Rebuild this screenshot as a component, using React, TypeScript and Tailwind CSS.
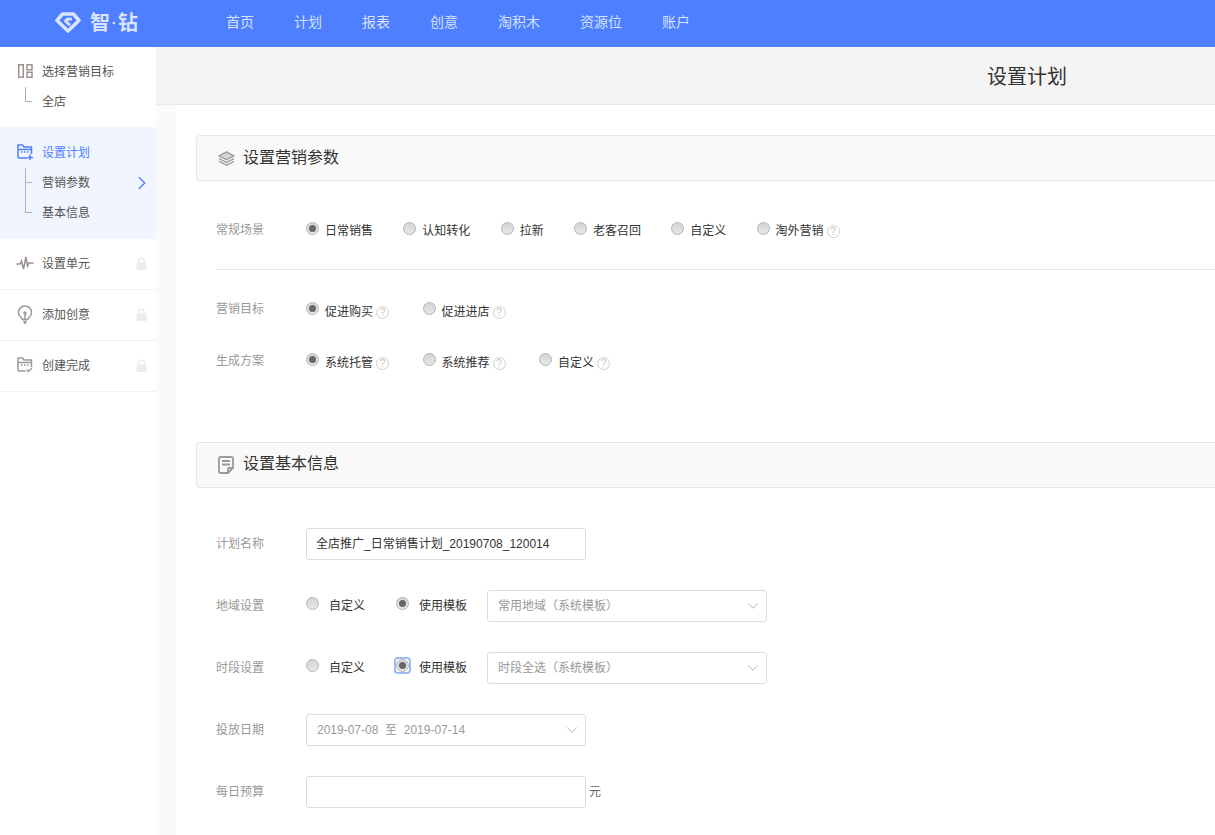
import React from "react";
import { ChevronDown, ChevronRight } from "lucide-react";

const font = "font-['Liberation_Sans','Noto_Sans_CJK_SC',sans-serif]";

function Radio({ checked, focused, offset }: { checked?: boolean; focused?: boolean; offset: string }) {
  return (
    <span className={`relative flex h-[13px] w-[13px] shrink-0 items-center justify-center ${offset} ${focused ? "rounded-[2px] outline-2 outline-[#9dbcf5]" : ""}`}>
      <span className="flex h-[13px] w-[13px] items-center justify-center rounded-full border border-[#b4b4b4] bg-gradient-to-b from-[#d4d4d4] to-[#e8e8e8]">
        {checked && <span className="h-[7px] w-[7px] rounded-full bg-[#666]" />}
      </span>
    </span>
  );
}

function Help() {
  return (
    <span className="ml-[3px] mt-[1px] flex h-[13px] w-[13px] shrink-0 items-center justify-center rounded-full border border-[#d0d0d0] text-[10px] leading-none text-[#c4c4c4]">?</span>
  );
}

function Option({
  label,
  checked,
  help,
  gap = "gap-[6px]",
  focused,
  radioOffset,
  textOffset,
}: {
  label: string;
  checked?: boolean;
  help?: boolean;
  gap?: string;
  focused?: boolean;
  radioOffset: string;
  textOffset: string;
}) {
  return (
    <div className={`flex items-center ${gap}`}>
      <Radio checked={checked} focused={focused} offset={radioOffset} />
      <div className={`relative flex items-center ${textOffset}`}>
        <span className="text-[12px] text-[#333]">{label}</span>
        {help && <Help />}
      </div>
    </div>
  );
}

function Row({ label, className = "", children }: { label: string; className?: string; children: React.ReactNode }) {
  return (
    <div className={`ml-[20px] flex items-center ${className}`}>
      <span className="w-[90px] shrink-0 text-[12px] text-[#999]">{label}</span>
      {children}
    </div>
  );
}

function SectionHead({ icon, title, className = "", titleClass = "" }: { icon: React.ReactNode; title: string; className?: string; titleClass?: string }) {
  return (
    <div className={`flex h-[46px] items-center rounded-l-[4px] border border-r-0 border-[#e6e6e6] bg-[#f9f9f9] pl-[20px] ${className}`}>
      <span className="flex w-[18px] items-center justify-center">{icon}</span>
      <span className={`relative ml-[8px] text-[16px] text-[#333] ${titleClass}`}>{title}</span>
    </div>
  );
}

function Select({ text, width = "w-[280px]", className = "" }: { text: string; width?: string; className?: string }) {
  return (
    <div className={`flex h-[32px] items-center justify-between rounded-[3px] border border-[#dcdcdc] bg-white pl-[10px] pr-[4px] ${width} ${className}`}>
      <span className="whitespace-pre text-[12px] text-[#999]">{text}</span>
      <ChevronDown size={18} color="#999" strokeWidth={1} />
    </div>
  );
}

function SideLabel({ children, active }: { children: React.ReactNode; active?: boolean }) {
  return <span className={`text-[12px] ${active ? "text-[#4d7fff]" : "text-[#555]"}`}>{children}</span>;
}

function SubRow({ label, last, arrow }: { label: string; last?: boolean; arrow?: boolean }) {
  return (
    <div className="flex h-[30px] items-center">
      <div className="ml-[25px] flex h-full w-[7px] shrink-0 flex-col">
        <div className="h-[15px] border-b border-l border-[#b0b0b0]" />
        {!last && <div className="h-[15px] border-l border-[#b0b0b0]" />}
      </div>
      <span className="ml-[10px] flex-1 text-[12px] text-[#555]">{label}</span>
      {arrow && <ChevronRight size={22} color="#4d7fff" strokeWidth={1.5} className="mr-[3px]" />}
    </div>
  );
}

const ILock = () => (
  <svg width="11" height="13" viewBox="0 0 11 13" fill="none">
    <path d="M2.800 6V3.800a2.700 2.700 0 0 1 5.400 0V6" stroke="#ececec" strokeWidth="1.400" />
    <rect x="0.500" y="5.500" width="10" height="7.500" rx="1" fill="#ececec" />
  </svg>
);

function LockedItem({ icon, label }: { icon: React.ReactNode; label: string }) {
  return (
    <div className="flex h-[51px] items-center border-b border-[#f2f2f2] pb-[2px] pl-[16px] pr-[9px]">
      <span className="flex w-[18px] justify-center">{icon}</span>
      <span className="ml-[8px] flex-1"><SideLabel>{label}</SideLabel></span>
      <ILock />
    </div>
  );
}

const IGrid = () => (
  <svg width="15" height="14" viewBox="0 0 15 14" fill="none" stroke="#9a928e" strokeWidth="1.500">
    <rect x="0.750" y="0.750" width="4.500" height="12.500" />
    <rect x="9" y="0.750" width="5" height="5" />
    <rect x="9" y="8.250" width="5" height="5" />
  </svg>
);
const IFolderPlus = () => (
  <svg width="16" height="16" viewBox="0 0 16 16" fill="none" stroke="#4d7fff" strokeWidth="1.500">
    <path d="M1 5.500V1h4.500L7 3h7.500v7M1 5.500h13.500M1 5v8a1 1 0 0 0 1 1h8.500" />
    <path d="M13 10.500v5.500M10.500 13.500h5.500" />
    <path d="M4 8h1.500M7 8h1.500M10 8h1.500" />
  </svg>
);
const IPulse = () => (
  <svg width="18" height="16" viewBox="0 0 18 16" fill="none" stroke="#9a8f8f" strokeWidth="1.500">
    <path d="M0.500 9H4l1.500-3 2 8L10 2l1.500 9 1.500-3h4.500" />
  </svg>
);
const IBulb = () => (
  <svg width="16" height="19" viewBox="0 0 16 19" fill="none" stroke="#9a9a9a" strokeWidth="1.500">
    <path d="M5.500 14.500C4.500 12.500 1.500 11.500 1.500 7.500a6.500 6.500 0 0 1 13 0c0 4-3 5-4 7z" />
    <path d="M6 16.500h4M7 18.300h2M8 14V9" />
    <circle cx="8" cy="8" r="1" />
  </svg>
);
const IFolderCheck = () => (
  <svg width="16" height="16" viewBox="0 0 16 16" fill="none" stroke="#9a9a9a" strokeWidth="1.500">
    <path d="M1 5.500V1h4.500L7 3h7.500v7M1 5.500h13.500M1 5v8a1 1 0 0 0 1 1h6.500" />
    <path d="M9.500 12.500l2 2 3.500-3.500" />
    <path d="M4 8h1.500M7 8h1.500M10 8h1.500" />
  </svg>
);
const INote = () => (
  <svg width="16" height="18" viewBox="0 0 16 18" fill="none" stroke="#9a9a9a" strokeWidth="1.800">
    <path d="M10 17H2.500A1.500 1.500 0 0 1 1 15.500v-13A1.500 1.500 0 0 1 2.500 1h11A1.500 1.500 0 0 1 15 2.500V12z" />
    <path d="M10 17v-4a1 1 0 0 1 1-1h4M4 5h8M4 8.500h8" />
  </svg>
);
const ILayers = () => (
  <svg width="17" height="15" viewBox="0 0 17 15" fill="none" stroke="#a0a0a0" strokeWidth="1.500" strokeLinejoin="round">
    <path d="M8.500 1L16 4.800 8.500 8.600 1 4.800z" fill="#d8d8d8" />
    <path d="M1 7.600l7.500 3.800L16 7.600" />
    <path d="M1 10.400l7.500 3.800 7.500-3.800" />
  </svg>
);
const ILogo = () => (
  <svg width="26" height="21" viewBox="0 0 26 21" fill="none">
    <path d="M7.500 2h11l5.500 6.500L13 19 2 8.500z" stroke="#dbe4ff" strokeWidth="3.500" strokeLinejoin="round" />
    <path d="M15 13.200L10.500 9l1.800-1.800h4.700" stroke="#dbe4ff" strokeWidth="2.800" />
  </svg>
);

export default function App() {
  const nav = ["首页", "计划", "报表", "创意", "淘积木", "资源位", "账户"];
  const r1 = { radioOffset: "-top-[2px]", textOffset: "top-[1px]" };
  const r2 = { radioOffset: "-top-[1px]", textOffset: "top-[3px]" };
  const r3 = { radioOffset: "-top-[2px]", textOffset: "top-[2px]" };
  const f = { radioOffset: "-top-[3px]", textOffset: "top-[0px]", gap: "gap-[10px]" };
  return (
    <div className={`flex h-[835px] w-[1215px] flex-col overflow-hidden bg-white ${font}`}>
      <header className="flex h-[47px] shrink-0 items-center bg-[#4d7fff] pb-[2px]">
        <div className="ml-[55px] flex w-[171px] items-center">
          <ILogo />
          <span className="ml-[9px] flex items-center whitespace-nowrap text-[20px] font-bold leading-none text-[#dbe4ff]">
            <span>智</span>
            <span className="w-[8px] text-center text-[14px]">·</span>
            <span>钻</span>
          </span>
        </div>
        <nav className="flex gap-[40px]">
          {nav.map((n) => (
            <span key={n} className="text-[14px] text-[#d5e1ff]">{n}</span>
          ))}
        </nav>
      </header>
      <div className="flex min-h-0 flex-1">
        <aside className="w-[156px] shrink-0 bg-white">
          <div className="h-[80px] pt-[9px]">
            <div className="flex h-[31px] items-center pb-[1px] pl-[16px]">
              <span className="flex w-[18px] justify-center"><IGrid /></span>
              <span className="ml-[8px]"><SideLabel>选择营销目标</SideLabel></span>
            </div>
            <SubRow label="全店" last />
          </div>
          <div className="h-[112px] bg-[#f0f5ff] pt-[10px]">
            <div className="flex h-[31px] items-center pb-[1px] pl-[16px]">
              <span className="flex w-[18px] justify-center"><IFolderPlus /></span>
              <span className="ml-[8px]"><SideLabel active>设置计划</SideLabel></span>
            </div>
            <SubRow label="营销参数" arrow />
            <SubRow label="基本信息" last />
          </div>
          <LockedItem icon={<IPulse />} label="设置单元" />
          <LockedItem icon={<IBulb />} label="添加创意" />
          <LockedItem icon={<IFolderCheck />} label="创建完成" />
        </aside>
        <main className="flex min-w-0 flex-1 flex-col">
          <div className="flex h-[58px] shrink-0 items-center border-b border-[#e8e8e8] bg-[#f4f4f4] pl-[831px] pt-[2px]">
            <span className="whitespace-nowrap text-[20px] text-[#333]">设置计划</span>
          </div>
          <div className="flex min-h-0 flex-1">
            <div className="w-[20px] shrink-0 bg-[#fafafa]" />
            <div className="min-w-0 flex-1 pl-[20px] pt-[30px]">
              <SectionHead icon={<ILayers />} title="设置营销参数" />
              <Row label="常规场景" className="mt-[37px] h-[24px]">
                <div className="flex gap-[30.3px]">
                  <Option label="日常销售" checked {...r1} />
                  <Option label="认知转化" {...r1} />
                  <Option label="拉新" {...r1} />
                  <Option label="老客召回" {...r1} />
                  <Option label="自定义" {...r1} />
                  <Option label="淘外营销" help {...r1} />
                </div>
              </Row>
              <div className="ml-[20px] mt-[27px] h-px bg-[#e6e6e6]" />
              <Row label="营销目标" className="mt-[27px] h-[24px]">
                <div className="flex gap-[33.5px]">
                  <Option label="促进购买" checked help {...r2} />
                  <Option label="促进进店" help {...r2} />
                </div>
              </Row>
              <Row label="生成方案" className="mt-[28px] h-[24px]">
                <div className="flex gap-[33.5px]">
                  <Option label="系统托管" checked help {...r3} />
                  <Option label="系统推荐" help {...r3} />
                  <Option label="自定义" help {...r3} />
                </div>
              </Row>
              <SectionHead icon={<INote />} title="设置基本信息" className="mt-[69px]" titleClass="-top-[1px]" />
              <Row label="计划名称" className="mt-[40px] h-[32px]">
                <div className="flex h-[32px] w-[280px] items-center rounded-[3px] border border-[#dcdcdc] bg-white pl-[9px]">
                  <span className="text-[12px] text-[#333]">全店推广_日常销售计划_20190708_120014</span>
                </div>
              </Row>
              <Row label="地域设置" className="mt-[30px] h-[32px]">
                <div className="flex items-center gap-[31px]">
                  <Option label="自定义" {...f} />
                  <Option label="使用模板" checked {...f} />
                </div>
                <Select text="常用地域（系统模板）" className="ml-[20px]" />
              </Row>
              <Row label="时段设置" className="mt-[30px] h-[32px]">
                <div className="flex items-center gap-[31px]">
                  <Option label="自定义" {...f} />
                  <Option label="使用模板" checked focused {...f} />
                </div>
                <Select text="时段全选（系统模板）" className="ml-[20px]" />
              </Row>
              <Row label="投放日期" className="mt-[30px] h-[32px]">
                <Select text="2019-07-08  至  2019-07-14" />
              </Row>
              <Row label="每日预算" className="mt-[30px] h-[32px]">
                <div className="h-[32px] w-[280px] rounded-[3px] border border-[#dcdcdc] bg-white" />
                <span className="ml-[3px] text-[12px] text-[#666]">元</span>
              </Row>
            </div>
          </div>
        </main>
      </div>
    </div>
  );
}
